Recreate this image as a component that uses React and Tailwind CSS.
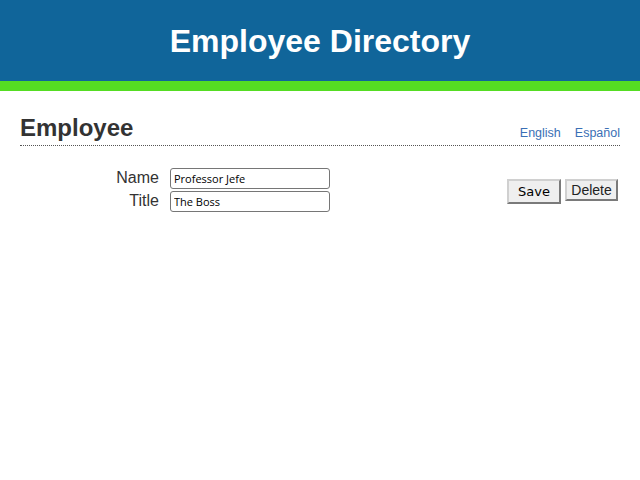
import React from 'react';

function Field({ label, value }) {
  return (
    <div className="flex items-center h-[23px]">
      <label className="w-[150px] pr-[11px] text-right text-[16px] text-[#333] -mt-[2px]">{label}</label>
      <input
        defaultValue={value}
        className="w-[160px] h-[21px] rounded-[3px] border border-[#767676] px-[3px] text-[11px] text-black font-['Open_Sans',sans-serif] outline-none"
      />
    </div>
  );
}

export default function App() {
  return (
    <div className="min-h-[480px] bg-white font-['Liberation_Sans',Arial,sans-serif]">
      <header className="h-[81px] bg-[#10659a] flex items-center justify-center">
        <h1 className="text-[32px] font-bold text-white leading-none">Employee Directory</h1>
      </header>
      <div className="h-[10px] bg-[#55dd22]" />

      <div className="px-[20px] pt-[25px]">
        <div className="flex items-end justify-between border-b border-dotted border-[#555] pb-[5px]">
          <h2 className="text-[24px] font-bold text-[#333] leading-none">Employee</h2>
          <div className="flex gap-[14px] text-[12.5px] text-[#3a6fb5] leading-none pb-[1px]">
            <a href="#">English</a>
            <a href="#">Español</a>
          </div>
        </div>

        <div className="flex items-start justify-between pt-[21px]">
          <div className="flex flex-col">
            <Field label="Name" value="Professor Jefe" />
            <Field label="Title" value="The Boss" />
          </div>
          <div className="flex items-start gap-[4px] pt-[12px] pr-[2px]">
            <button className="w-[54px] h-[25px] bg-[#efefef] border-2 border-[#d0d0d0] border-r-[#7a7a7a] border-b-[#7a7a7a] text-[13px] text-black font-['DejaVu_Sans',sans-serif]">
              Save
            </button>
            <button className="w-[53px] h-[22px] bg-[#efefef] border-2 border-[#d0d0d0] border-r-[#7a7a7a] border-b-[#7a7a7a] text-[14px] text-[#222] leading-none">
              Delete
            </button>
          </div>
        </div>
      </div>
    </div>
  );
}
